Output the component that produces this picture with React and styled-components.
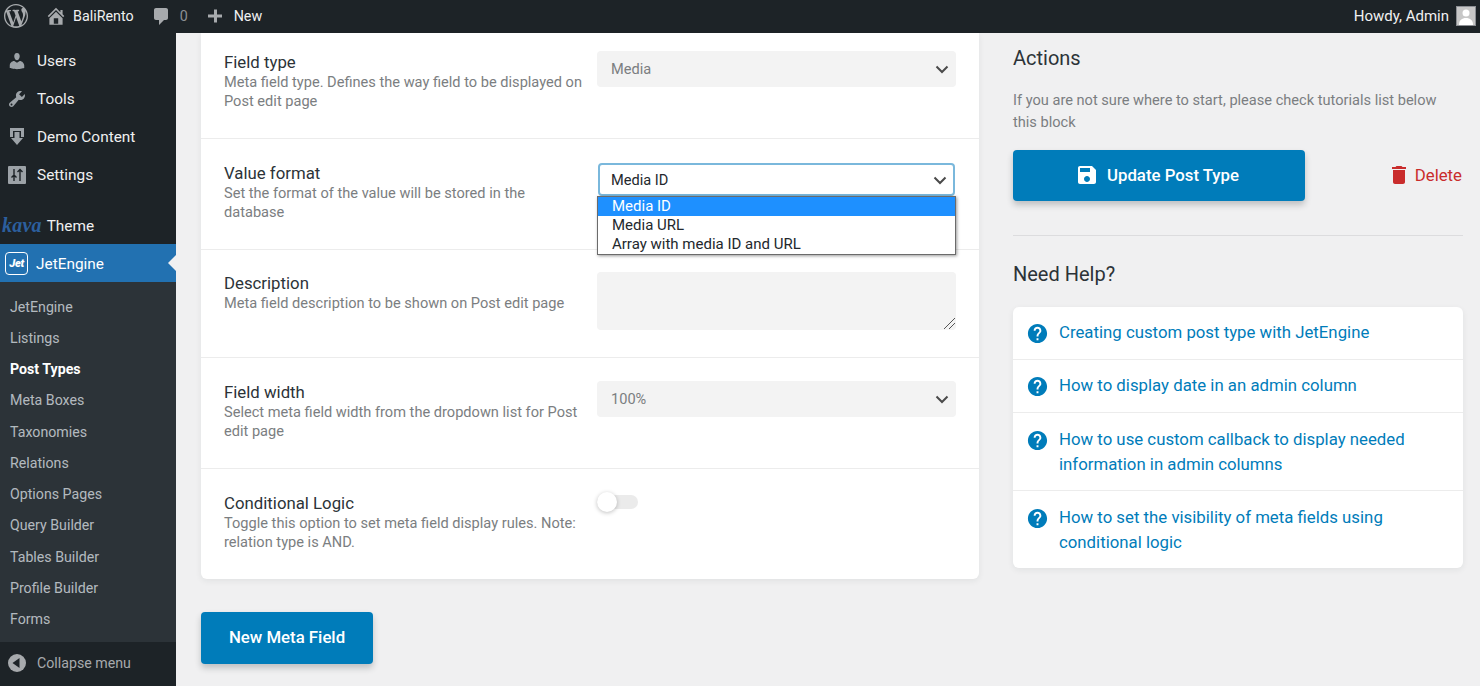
import React from 'react'
import styled, { createGlobalStyle } from 'styled-components'

const Global = createGlobalStyle`
  html, body { margin: 0; padding: 0; height: 100%; overflow: hidden; background: #f0f0f1; }
  body { font-family: Roboto, "Liberation Sans", sans-serif; }
  * { box-sizing: border-box; }
`

const Page = styled.div`
  width: 1480px;
  height: 686px;
  display: flex;
  flex-direction: column;
  overflow: hidden;
`

const AdminBar = styled.header`
  height: 33px;
  flex: none;
  display: flex;
  align-items: center;
  padding-bottom: 2px;
  background: #1d2327;
  color: #f0f0f1;
  font-size: 14.3px;
`
const BarItem = styled.div`
  display: flex;
  align-items: center;
  gap: ${p => p.$gap || 7}px;
  margin-left: ${p => p.$left || 0}px;
  color: ${p => p.$muted ? '#8c8f94' : '#f0f0f1'};
`
const BarRight = styled.div`
  margin-left: auto;
  display: flex;
  align-items: center;
  gap: 7px;
  padding-right: 4px;
  font-size: 15px;
`
const Avatar = styled.div`
  width: 20px;
  height: 20px;
  border: 1px solid #8c8f94;
  background: #c7c7c7;
  display: flex;
  overflow: hidden;
`

const Body = styled.div`
  flex: 1;
  display: flex;
  min-height: 0;
`
const Sidebar = styled.aside`
  width: 176px;
  flex: none;
  display: flex;
  flex-direction: column;
  background: #1d2327;
`
const TopMenu = styled.nav`
  display: flex;
  flex-direction: column;
  padding-top: 9px;
`
const MenuItem = styled.div`
  height: 38px;
  display: flex;
  align-items: center;
  gap: 10px;
  padding-left: 7px;
  color: #f0f0f1;
  font-size: 15.4px;
`
const IconBox = styled.span`
  width: 20px;
  height: 20px;
  flex: none;
  display: flex;
  align-items: center;
  justify-content: center;
  color: #9ca2a7;
`
const ThemeItem = styled.div`
  height: 38px;
  margin-top: 12px;
  display: flex;
  align-items: center;
  gap: 5px;
  padding: 1px 0 0 2px;
  color: #f0f0f1;
  font-size: 15.4px;
`
const Kava = styled.span`
  font-family: "Liberation Serif", serif;
  font-style: italic;
  font-weight: 700;
  font-size: 20px;
  letter-spacing: 0.2px;
  color: #2c5f9e;
`
const ActiveItem = styled.div`
  position: relative;
  height: 38px;
  display: flex;
  align-items: center;
  gap: 8px;
  padding: 1px 0 0 5px;
  background: #2271b1;
  color: #fff;
  font-size: 15.4px;
  &::after {
    content: '';
    position: absolute;
    right: 0;
    top: 11px;
    border: 8px solid transparent;
    border-right-color: #f0f0f1;
    border-left-width: 0;
  }
`
const JetBadge = styled.span`
  width: 23px;
  height: 23px;
  border: 1px solid #fff;
  border-radius: 4px;
  display: flex;
  align-items: center;
  justify-content: center;
  font-size: 11px;
  font-weight: 900;
  font-style: italic;
  letter-spacing: -0.3px;
  color: #fff;
`
const SubMenu = styled.nav`
  flex: 1;
  display: flex;
  flex-direction: column;
  padding-top: 9px;
  background: #2c3338;
`
const SubItem = styled.div`
  height: 31.25px;
  display: flex;
  align-items: center;
  padding-left: 10px;
  font-size: 14.2px;
  font-weight: ${p => p.$current ? 700 : 400};
  color: ${p => p.$current ? '#fff' : 'rgba(240,246,252,0.7)'};
`
const Collapse = styled.div`
  height: 44px;
  flex: none;
  display: flex;
  align-items: center;
  gap: 10px;
  padding: 0 0 2px 7px;
  font-size: 14.2px;
  color: #a7aaad;
`

const Main = styled.main`
  flex: 1;
  display: flex;
  align-items: flex-start;
  gap: 34px;
  padding: 0 17px 0 25px;
  min-width: 0;
`
const LeftColumn = styled.section`
  width: 778px;
  flex: none;
  display: flex;
  flex-direction: column;
  align-items: flex-start;
`
const Card = styled.div`
  width: 100%;
  background: #fff;
  border-radius: 0 0 6px 6px;
  box-shadow: 0 2px 6px rgba(35, 40, 45, 0.07);
`
const Row = styled.div`
  height: ${p => p.$height}px;
  display: grid;
  grid-template-columns: 373px 359px;
  align-items: start;
  padding: ${p => p.$top}px 0 0 23px;
  border-bottom: ${p => p.$last ? 'none' : '1px solid #ececec'};
`
const FieldInfo = styled.div`
  padding: ${p => p.$offset}px 14px 0 0;
`
const FieldTitle = styled.div`
  margin-bottom: 2px;
  font-size: 16.8px;
  line-height: 18px;
  color: #2c3338;
`
const FieldDesc = styled.div`
  font-size: 14.6px;
  line-height: 19px;
  color: #7b7e81;
`
const Select = styled.div`
  height: 36px;
  display: flex;
  align-items: center;
  justify-content: space-between;
  padding: 0 7px 0 14px;
  border-radius: 4px;
  font-size: 14.6px;
  background: #f3f3f3;
  color: #7b7e81;
`
const OpenSelect = styled(Select)`
  height: 33px;
  margin: 0 1px;
  padding: 0 6px 0 11px;
  border: 2px solid #7ab8dc;
  background: #fff;
  color: #23282d;
`
const SelectWrap = styled.div`
  position: relative;
`
const Options = styled.ul`
  position: absolute;
  left: 0;
  right: 0;
  top: ${p => p.$top}px;
  margin: 0;
  padding: 0;
  list-style: none;
  background: #fff;
  border: 1px solid #6b6b6b;
  box-shadow: 1px 1px 3px rgba(0, 0, 0, 0.4);
  font-size: 15px;
  color: #23282d;
`
const Option = styled.li`
  height: 19px;
  line-height: 19px;
  padding-left: 14px;
  background: ${p => p.$selected ? '#1e90ff' : 'transparent'};
  color: ${p => p.$selected ? '#fff' : 'inherit'};
`
const TextArea = styled.div`
  position: relative;
  height: 58px;
  border-radius: 4px;
  background: #f3f3f3;
`
const Grip = styled.svg`
  position: absolute;
  right: 1px;
  bottom: 1px;
`
const Toggle = styled.div`
  position: relative;
  width: 41px;
  height: 14px;
  margin-top: 2px;
  border-radius: 7px;
  background: #ebebeb;
  &::before {
    content: '';
    position: absolute;
    left: 0;
    top: -3px;
    width: 20px;
    height: 20px;
    border-radius: 50%;
    background: #fff;
    box-shadow: 0 1px 4px rgba(0, 0, 0, 0.25);
  }
`
const PrimaryButton = styled.button`
  width: ${p => p.$width}px;
  height: ${p => p.$height}px;
  display: flex;
  align-items: center;
  justify-content: center;
  gap: 8px;
  padding: 0 4px 2px 0;
  border: 0;
  border-radius: 4px;
  background: #007cba;
  color: #fff;
  font-family: inherit;
  font-size: 16.8px;
  font-weight: 500;
  box-shadow: 0 4px 6px rgba(35, 40, 45, 0.24);
`
const NewFieldButton = styled(PrimaryButton)`
  margin-top: 33px;
  padding: 0 0 2px;
`

const RightColumn = styled.aside`
  flex: 1;
  display: flex;
  flex-direction: column;
  padding-top: 13px;
`
const Heading = styled.h3`
  margin: 0;
  font-size: 20px;
  line-height: 24px;
  font-weight: 400;
  color: #2c3338;
`
const Note = styled.p`
  margin: 19px 20px 17px 0;
  font-size: 14.6px;
  line-height: 22px;
  color: #7b7e81;
`
const Actions = styled.div`
  display: flex;
  align-items: center;
  justify-content: space-between;
  padding-bottom: 34px;
  border-bottom: 1px solid #dcdcde;
`
const DeleteLink = styled.a`
  display: flex;
  align-items: center;
  gap: 4px;
  margin: 0 1px 2px 0;
  font-size: 16.8px;
  color: #c92c2c;
`
const HelpHeading = styled(Heading)`
  margin: 26px 0 21px;
`
const HelpCard = styled.ul`
  margin: 0;
  padding: 0;
  list-style: none;
  background: #fff;
  border-radius: 6px;
  box-shadow: 0 2px 6px rgba(35, 40, 45, 0.07);
`
const HelpRow = styled.li`
  display: flex;
  gap: 10px;
  padding: ${p => p.$long ? '14px 16px 13px 13px' : '13px 16px 14px 13px'};
  font-size: 16.8px;
  line-height: 25px;
  color: #007cba;
  border-bottom: ${p => p.$last ? 'none' : '1px solid #ececec'};
`
const HelpIcon = styled.svg`
  flex: none;
  margin-top: 2px;
`

const Chevron = () => (
  <svg width="14" height="14" viewBox="0 0 14 14" fill="none" stroke="#4a4a4a" strokeWidth="2">
    <path d="M1.5 4.5 7 10l5.5-5.5" />
  </svg>
)

const UserIcon = () => (
  <svg width="22" height="22" viewBox="0 0 20 20" fill="currentColor">
    <path d="M10 9.25c-2.27 0-2.73-3.44-2.73-3.44C7 4.02 7.82 2 9.97 2c2.16 0 2.98 2.02 2.71 3.81 0 0-.41 3.44-2.68 3.44zm0 2.57L12.72 10c2.39 0 4.52 2.33 4.52 4.53v2.49s-3.65 1.13-7.24 1.13c-3.65 0-7.24-1.13-7.24-1.13v-2.49c0-2.25 1.94-4.48 4.47-4.48z" />
  </svg>
)
const WrenchIcon = () => (
  <svg width="22" height="22" viewBox="0 0 20 20" fill="currentColor">
    <path d="M16.68 9.77c-1.34 1.34-3.3 1.67-4.95.99l-5.41 6.52c-.99.99-2.59.99-3.58 0s-.99-2.59 0-3.57l6.52-5.42c-.68-1.65-.35-3.61.99-4.95 1.28-1.28 3.12-1.62 4.72-1.06l-2.89 2.89 2.82 2.82 2.86-2.87c.53 1.58.18 3.39-1.08 4.65zM3.81 16.21c.4.39 1.04.39 1.43 0 .4-.4.4-1.04 0-1.43-.39-.4-1.03-.4-1.43 0-.39.39-.39 1.03 0 1.43z" />
  </svg>
)
const DemoIcon = () => (
  <svg width="18" height="20" viewBox="0 0 18 20" fill="currentColor">
    <path d="M2 1h14v9h-3V4H5v6H2z" />
    <path d="M6.5 5h5v6H15l-6 7-6-7h3.5z" />
  </svg>
)
const SettingsIcon = () => (
  <svg width="18" height="18" viewBox="0 0 18 18">
    <rect width="18" height="18" rx="1" fill="currentColor" />
    <path d="M6 3v12M3.5 11.5 6 9l2.500 2.500M12 15V3M9.500 6 12 3.500 14.500 6" stroke="#1d2327" strokeWidth="1.400" fill="none" />
  </svg>
)
const CollapseIcon = () => (
  <svg width="20" height="20" viewBox="0 0 20 20">
    <circle cx="10" cy="10" r="9" fill="#a7aaad" />
    <path d="M12.500 5v10L5.500 10z" fill="#1d2327" />
  </svg>
)
const WpLogo = () => (
  <svg width="24" height="24" viewBox="0 0 20 20" fill="#a7aaad">
    <path d="M20 10c0-5.510-4.490-10-10-10C4.480 0 0 4.490 0 10c0 5.520 4.480 10 10 10 5.510 0 10-4.480 10-10zM7.780 15.370L4.370 6.220c.55-.020 1.170-.080 1.170-.080.500-.060.440-1.130-.060-1.110 0 0-1.450.110-2.370.110-.180 0-.370 0-.580-.010C4.120 2.690 6.890 1.030 10 1.030c2.360 0 4.480.900 6.080 2.380-.68-.110-1.650.390-1.650 1.580 0 .740.450 1.360.900 2.100.350.610.550 1.360.550 2.460 0 1.490-1.400 5-1.400 5l-3.030-8.370c.540-.020.820-.170.820-.170.500-.050.440-1.250-.060-1.220 0 0-1.440.120-2.380.120-.870 0-2.330-.120-2.330-.120-.500-.030-.560 1.200-.060 1.220l.920.080 1.260 3.410zM17.410 10c.240-.640.740-1.870.430-4.250.700 1.290 1.050 2.710 1.050 4.250 0 3.290-1.730 6.240-4.400 7.780.970-2.590 1.940-5.200 2.920-7.780zM6.100 18.090C3.120 16.650 1.110 13.530 1.110 10c0-1.300.230-2.480.720-3.580 1.420 3.890 2.840 7.790 4.270 11.670zm4.020-6.960l2.580 6.980c-.860.290-1.760.450-2.700.450-.790 0-1.570-.110-2.290-.330.810-2.380 1.620-4.740 2.410-7.100z" />
  </svg>
)
const HomeIcon = () => (
  <svg width="22" height="22" viewBox="0 0 20 20" fill="#a7aaad">
    <path d="M16 8.500l1.530 1.530-1.060 1.060L10 4.620l-6.470 6.470-1.060-1.060L10 2.500l4 4v-2h2v4zm-6-2.460l6 5.990V18H4v-5.970zM12 17v-5H8v5h4z" />
  </svg>
)
const CommentIcon = () => (
  <svg width="20" height="20" viewBox="0 0 20 20" fill="#a7aaad">
    <path d="M5 2h10c1.100 0 2 .9 2 2v8c0 1.100-.9 2-2 2h-2l-5 5v-5H5c-1.100 0-2-.9-2-2V4c0-1.100.9-2 2-2z" />
  </svg>
)
const PlusIcon = () => (
  <svg width="20" height="20" viewBox="0 0 20 20" fill="#a7aaad">
    <path d="M17 7v3h-5v5H9v-5H3V7h6V2h3v5h5z" transform="translate(0 1.500)" />
  </svg>
)
const SaveIcon = () => (
  <svg width="24" height="24" viewBox="0 0 24 24" fill="#fff">
    <path d="M17 3H5c-1.110 0-2 .9-2 2v14c0 1.100.89 2 2 2h14c1.100 0 2-.9 2-2V7l-4-4zm-5 16c-1.660 0-3-1.340-3-3s1.340-3 3-3 3 1.340 3 3-1.340 3-3 3zm3-10H5V5h10v4z" />
  </svg>
)
const TrashIcon = () => (
  <svg width="24" height="24" viewBox="0 0 24 24" fill="#c92c2c">
    <path d="M6 19c0 1.100.9 2 2 2h8c1.100 0 2-.9 2-2V7H6v12zM19 4h-3.500l-1-1h-5l-1 1H5v2h14V4z" />
  </svg>
)
const QuestionIcon = () => (
  <HelpIcon width="23" height="23" viewBox="0 0 24 24" fill="#007cba">
    <path d="M12 2C6.480 2 2 6.480 2 12s4.480 10 10 10 10-4.480 10-10S17.520 2 12 2zm1 17h-2v-2h2v2zm2.070-7.750l-.9.920C13.450 12.900 13 13.500 13 15h-2v-.5c0-1.100.45-2.100 1.170-2.830l1.240-1.260c.37-.36.59-.86.59-1.410 0-1.100-.9-2-2-2s-2 .9-2 2H8c0-2.210 1.790-4 4-4s4 1.790 4 4c0 .88-.36 1.680-.93 2.250z" />
  </HelpIcon>
)

const subItems = ['JetEngine', 'Listings', 'Post Types', 'Meta Boxes', 'Taxonomies', 'Relations', 'Options Pages', 'Query Builder', 'Tables Builder', 'Profile Builder', 'Forms']
const helpLinks = [
  'Creating custom post type with JetEngine',
  'How to display date in an admin column',
  'How to use custom callback to display needed information in admin columns',
  'How to set the visibility of meta fields using conditional logic',
]

export default function App() {
  return (
    <Page>
      <Global />
      <AdminBar>
        <BarItem $left={4}><WpLogo /></BarItem>
        <BarItem $left={17} $gap={6}><HomeIcon />BaliRento</BarItem>
        <BarItem $left={17} $muted $gap={9}><CommentIcon />0</BarItem>
        <BarItem $left={17} $gap={9}><PlusIcon />New</BarItem>
        <BarRight>
          Howdy, Admin
          <Avatar>
            <svg width="18" height="18" viewBox="0 0 18 18" fill="#fff">
              <circle cx="9" cy="6" r="3.500" />
              <path d="M2 18c0-5 3-7 7-7s7 2 7 7z" />
            </svg>
          </Avatar>
        </BarRight>
      </AdminBar>
      <Body>
        <Sidebar>
          <TopMenu>
            <MenuItem><IconBox><UserIcon /></IconBox>Users</MenuItem>
            <MenuItem><IconBox><WrenchIcon /></IconBox>Tools</MenuItem>
            <MenuItem><IconBox><DemoIcon /></IconBox>Demo Content</MenuItem>
            <MenuItem><IconBox><SettingsIcon /></IconBox>Settings</MenuItem>
            <ThemeItem><Kava>kava</Kava>Theme</ThemeItem>
            <ActiveItem><JetBadge>Jet</JetBadge>JetEngine</ActiveItem>
          </TopMenu>
          <SubMenu>
            {subItems.map(name => (
              <SubItem key={name} $current={name === 'Post Types'}>{name}</SubItem>
            ))}
          </SubMenu>
          <Collapse><CollapseIcon />Collapse menu</Collapse>
        </Sidebar>
        <Main>
          <LeftColumn>
            <Card>
              <Row $height={106} $top={18}>
                <FieldInfo $offset={2}>
                  <FieldTitle>Field type</FieldTitle>
                  <FieldDesc>Meta field type. Defines the way field to be displayed on Post edit page</FieldDesc>
                </FieldInfo>
                <Select>Media<Chevron /></Select>
              </Row>
              <Row $height={111} $top={24}>
                <FieldInfo $offset={1}>
                  <FieldTitle>Value format</FieldTitle>
                  <FieldDesc>Set the format of the value will be stored in the database</FieldDesc>
                </FieldInfo>
                <SelectWrap>
                  <OpenSelect>Media ID<Chevron /></OpenSelect>
                  <Options $top={33}>
                    <Option $selected>Media ID</Option>
                    <Option>Media URL</Option>
                    <Option>Array with media ID and URL</Option>
                  </Options>
                </SelectWrap>
              </Row>
              <Row $height={108} $top={22}>
                <FieldInfo $offset={2}>
                  <FieldTitle>Description</FieldTitle>
                  <FieldDesc>Meta field description to be shown on Post edit page</FieldDesc>
                </FieldInfo>
                <TextArea>
                  <Grip width="11" height="11" viewBox="0 0 11 11" stroke="#555" strokeWidth="1" fill="none">
                    <path d="M0 11 11 0M5 11l6-6" />
                  </Grip>
                </TextArea>
              </Row>
              <Row $height={111} $top={23}>
                <FieldInfo $offset={2}>
                  <FieldTitle>Field width</FieldTitle>
                  <FieldDesc>Select meta field width from the dropdown list for Post edit page</FieldDesc>
                </FieldInfo>
                <Select>100%<Chevron /></Select>
              </Row>
              <Row $height={110} $top={24} $last>
                <FieldInfo $offset={1}>
                  <FieldTitle>Conditional Logic</FieldTitle>
                  <FieldDesc>Toggle this option to set meta field display rules. Note: relation type is AND.</FieldDesc>
                </FieldInfo>
                <Toggle />
              </Row>
            </Card>
            <NewFieldButton $width={172} $height={52}>New Meta Field</NewFieldButton>
          </LeftColumn>
          <RightColumn>
            <Heading>Actions</Heading>
            <Note>If you are not sure where to start, please check tutorials list below this block</Note>
            <Actions>
              <PrimaryButton $width={292} $height={51}><SaveIcon />Update Post Type</PrimaryButton>
              <DeleteLink><TrashIcon />Delete</DeleteLink>
            </Actions>
            <HelpHeading>Need Help?</HelpHeading>
            <HelpCard>
              {helpLinks.map((text, i) => (
                <HelpRow key={text} $long={i > 1} $last={i === helpLinks.length - 1}>
                  <QuestionIcon />
                  <span>{text}</span>
                </HelpRow>
              ))}
            </HelpCard>
          </RightColumn>
        </Main>
      </Body>
    </Page>
  )
}
